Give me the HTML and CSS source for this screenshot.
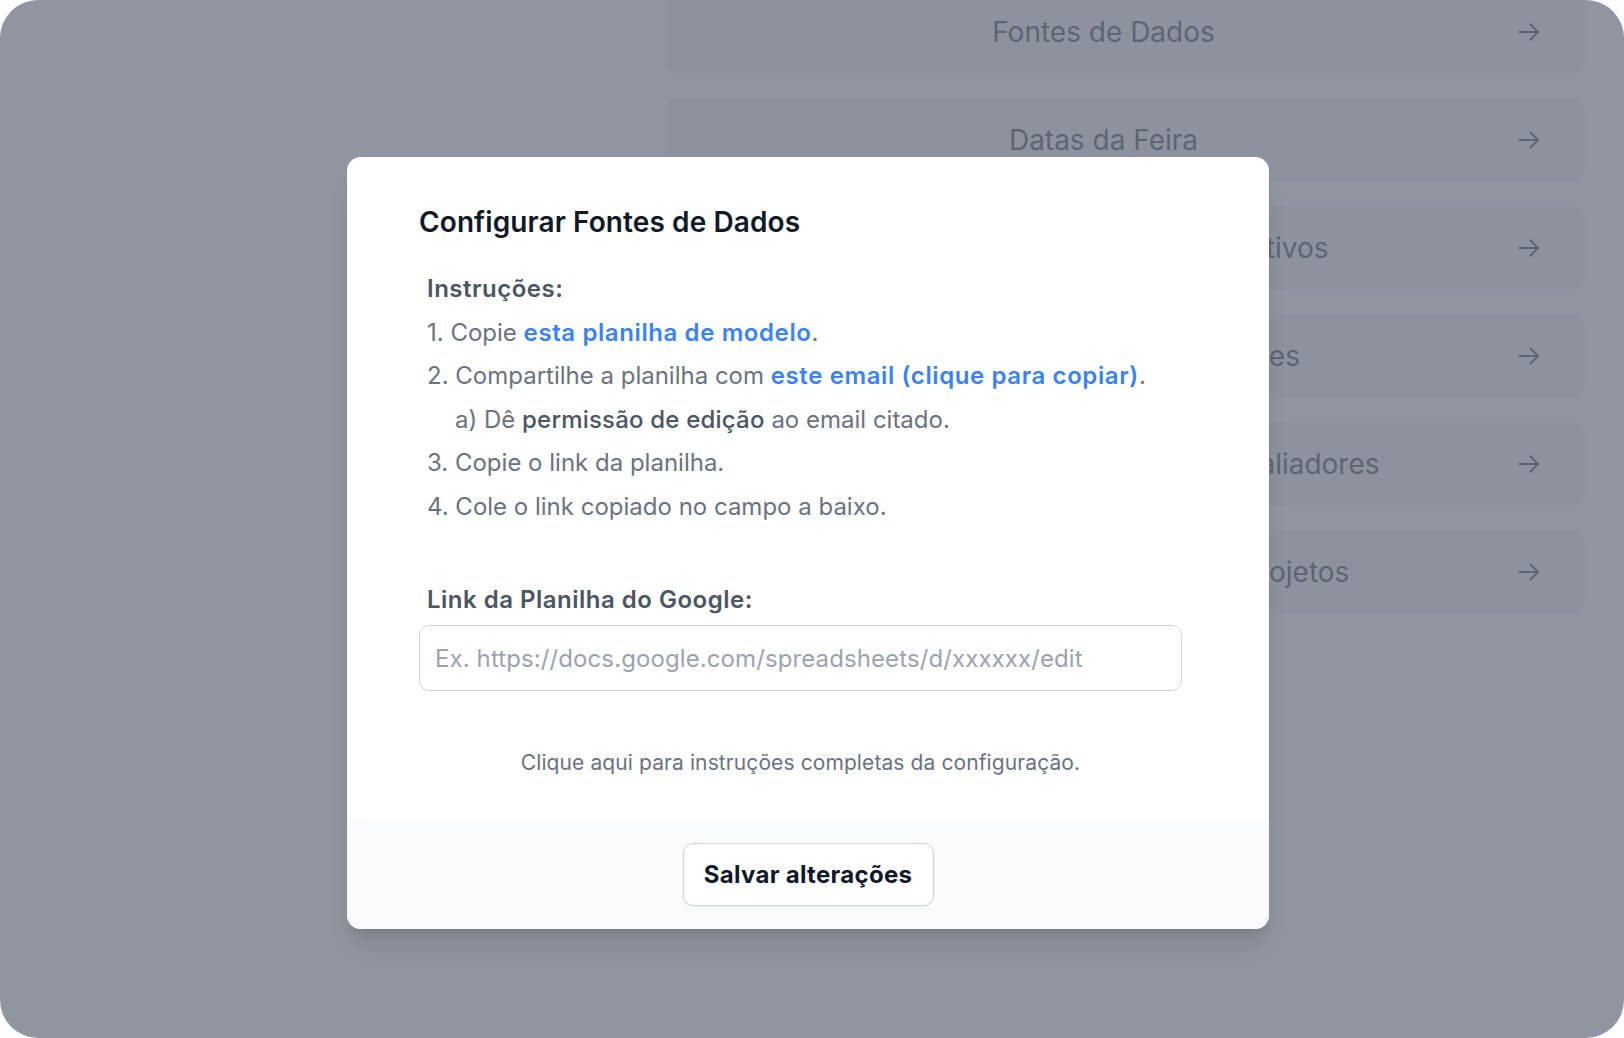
FILE: index.html
```html
<!DOCTYPE html>
<html lang="pt-BR">
<head>
<meta charset="utf-8">
<title>Configurar Fontes de Dados</title>
<link rel="stylesheet" href="styles.css">
</head>
<body>
<div class="frame">
  <main class="page">
    <div class="menu">
      <a class="card"><span class="card-label">Fontes de Dados</span><svg class="arrow" viewBox="0 0 22 18"><path d="M1.5 9H20M12.5 1.5 20 9l-7.5 7.5"/></svg></a>
      <a class="card"><span class="card-label">Datas da Feira</span><svg class="arrow" viewBox="0 0 22 18"><path d="M1.5 9H20M12.5 1.5 20 9l-7.5 7.5"/></svg></a>
      <a class="card"><span class="card-label">Configurar os Critérios Avaliativos</span><svg class="arrow" viewBox="0 0 22 18"><path d="M1.5 9H20M12.5 1.5 20 9l-7.5 7.5"/></svg></a>
      <a class="card"><span class="card-label">Gerenciar os Administradores</span><svg class="arrow" viewBox="0 0 22 18"><path d="M1.5 9H20M12.5 1.5 20 9l-7.5 7.5"/></svg></a>
      <a class="card"><span class="card-label">Distribuir os Projetos entre os Avaliadores</span><svg class="arrow" viewBox="0 0 22 18"><path d="M1.5 9H20M12.5 1.5 20 9l-7.5 7.5"/></svg></a>
      <a class="card"><span class="card-label">Acompanhar Avaliações dos Projetos</span><svg class="arrow" viewBox="0 0 22 18"><path d="M1.5 9H20M12.5 1.5 20 9l-7.5 7.5"/></svg></a>
    </div>
  </main>
  <div class="overlay"></div>
  <div class="modal">
    <div class="modal-body">
      <h2 class="title">Configurar Fontes de Dados</h2>
      <div class="instructions">
        <p class="heading">Instruções:</p>
        <p class="step">1. Copie <a class="link">esta planilha de modelo</a>.</p>
        <p class="step">2. Compartilhe a planilha com <a class="link">este email (clique para copiar)</a>.</p>
        <p class="step sub">a) Dê <strong>permissão de edição</strong> ao email citado.</p>
        <p class="step">3. Copie o link da planilha.</p>
        <p class="step">4. Cole o link copiado no campo a baixo.</p>
      </div>
      <div class="form">
        <label class="label" for="sheet">Link da Planilha do Google:</label>
        <input class="input" id="sheet" type="text" placeholder="Ex. https://docs.google.com/spreadsheets/d/xxxxxx/edit">
        <p class="help">Clique aqui para instruções completas da configuração.</p>
      </div>
    </div>
    <div class="modal-footer">
      <button class="btn" type="button">Salvar alterações</button>
    </div>
  </div>
</div>
</body>
</html>
```

FILE: styles.css
```css
* { box-sizing: border-box; }
html, body { margin: 0; padding: 0; }
body {
  background: #ffffff;
  font-family: Inter, "Noto Sans", "Liberation Sans", sans-serif;
  width: 1624px;
  height: 1038px;
  overflow: hidden;
}
.frame {
  position: relative;
  width: 1624px;
  height: 1038px;
  border-radius: 38px;
  overflow: hidden;
  background: #ffffff;
}
.page {
  display: flex;
  justify-content: flex-end;
  padding-right: 39px;
}
.menu {
  width: 920px;
  margin-top: -10px;
  display: flex;
  flex-direction: column;
  gap: 24px;
}
.card {
  height: 84px;
  border-radius: 12px;
  background: #f3f4f6;
  display: flex;
  align-items: center;
  padding: 0 45px 0 24px;
  color: #374151;
}
.card-label {
  flex: 1;
  text-align: center;
  font-size: 28px;
  white-space: nowrap;
}
.arrow {
  width: 22px;
  height: 18px;
  fill: none;
  stroke: #374151;
  stroke-width: 2;
  stroke-linecap: round;
  stroke-linejoin: round;
}
.overlay {
  position: absolute;
  inset: 0;
  background: rgba(107, 114, 128, 0.75);
}
.modal {
  position: absolute;
  left: 347px;
  top: 157px;
  width: 922px;
  background: #ffffff;
  border-radius: 14px;
  overflow: hidden;
  box-shadow: 0 20px 25px -5px rgba(0,0,0,0.1), 0 8px 10px -6px rgba(0,0,0,0.1);
}
.modal-body {
  padding: 47px 72px 0 72px;
}
.title {
  margin: 0;
  font-size: 28px;
  line-height: 36px;
  font-weight: 600;
  color: #111827;
  letter-spacing: 0.1px;
}
.instructions {
  margin-top: 27px;
  padding-left: 8px;
  font-size: 24px;
  line-height: 43.5px;
  color: #6b7280;
}
.instructions p { margin: 0; }
.heading {
  font-weight: 600;
  color: #4b5563;
  letter-spacing: 0.5px;
}
.sub { padding-left: 28px; }
.step strong {
  font-weight: 500;
  color: #4b5563;
  letter-spacing: 0.2px;
}
.link {
  color: #3b82f6;
  font-weight: 600;
  letter-spacing: 0.6px;
}
.form {
  width: 763px;
  margin-top: 54px;
  display: flex;
  flex-direction: column;
}
.label {
  padding-left: 8px;
  font-size: 24px;
  line-height: 36px;
  font-weight: 600;
  color: #4b5563;
  letter-spacing: 0.5px;
}
.input {
  margin-top: 7px;
  height: 66px;
  border: 1px solid #d1d5db;
  border-radius: 10px;
  padding: 0 15px;
  font-family: inherit;
  font-size: 24px;
  letter-spacing: 0.1px;
  color: #111827;
  background: #ffffff;
  outline: none;
}
.input::placeholder { color: #9ca3af; }
.help {
  margin: 58px 0 0 0;
  text-align: center;
  font-size: 21px;
  line-height: 28px;
  letter-spacing: 0.1px;
  color: #6b7280;
}
.modal-footer {
  margin-top: 43px;
  background: #f9fafb;
  padding: 23px 0 23px;
  display: flex;
  justify-content: center;
}
.btn {
  width: 251px;
  height: 63px;
  border: 1px solid #d1d5db;
  border-radius: 10px;
  background: #ffffff;
  box-shadow: 0 1px 2px rgba(0,0,0,0.05);
  font-family: inherit;
  font-size: 24px;
  font-weight: 700;
  letter-spacing: 0.3px;
  color: #111827;
}
```
